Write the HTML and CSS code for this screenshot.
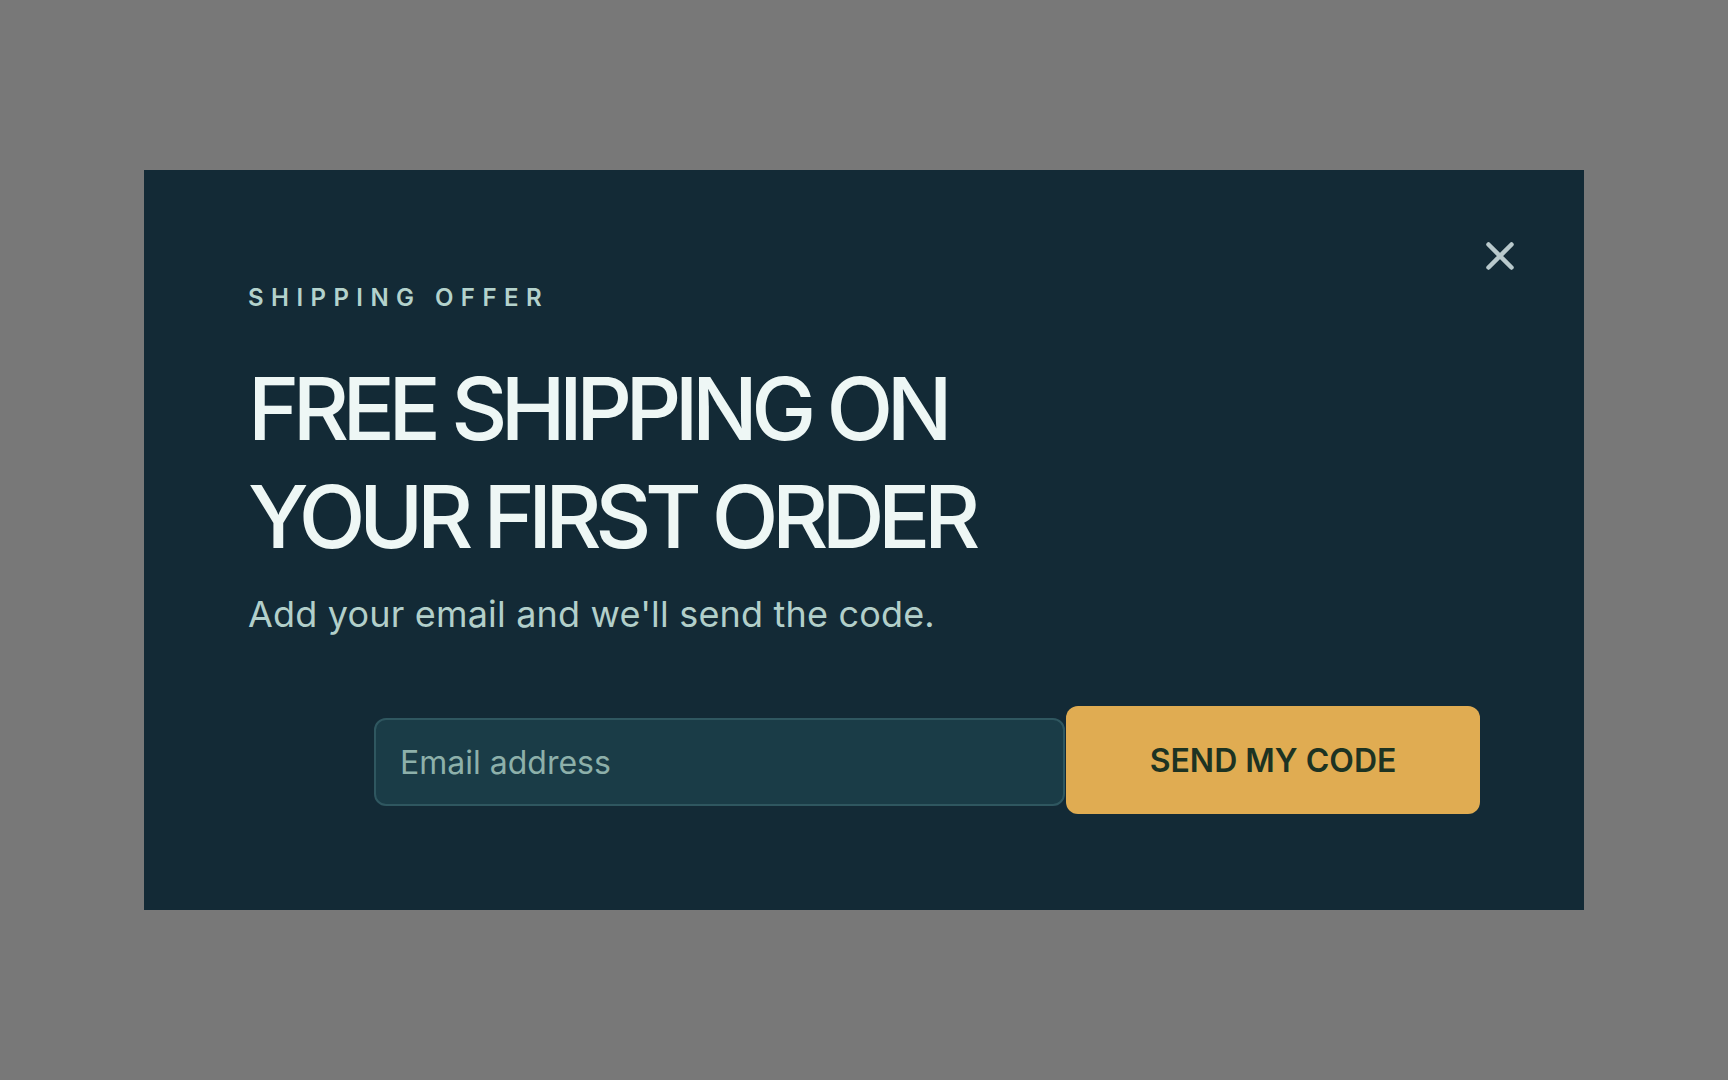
FILE: index.html
```html
<!DOCTYPE html>
<html lang="en">
<head>
    <meta charset="UTF-8">
    <meta name="viewport" content="width=device-width, initial-scale=1.0">
    <title>Free Shipping Offer</title>
    <link rel="stylesheet" href="styles.css">
</head>
<body>
    <div class="overlay">
        <div class="modal" role="dialog" aria-labelledby="offer-title">
            <button class="close-btn" type="button" aria-label="Close">
                <svg width="28" height="28" viewBox="0 0 28 28" fill="none">
                    <path d="M2.5 2.5L25.5 25.5M25.5 2.5L2.5 25.5" stroke="currentColor" stroke-width="4.5" stroke-linecap="round"/>
                </svg>
            </button>

            <div class="eyebrow">Shipping Offer</div>
            <h1 id="offer-title">Free shipping on<br>your first order</h1>
            <p class="subtitle">Add your email and we'll send the code.</p>

            <form class="signup-form" id="signup-form">
                <input type="email" class="email-input" placeholder="Email address">
                <button type="submit" class="submit-btn">Send my code</button>
            </form>
        </div>
    </div>
</body>
</html>
```

FILE: styles.css
```css
* {
    box-sizing: border-box;
}
body {
    margin: 0;
    background-color: #787878;
    font-family: Inter, "Noto Sans", sans-serif;
}
.overlay {
    height: 100vh;
    display: flex;
    align-items: center;
    justify-content: center;
}
.modal {
    position: relative;
    width: 1440px;
    height: 740px;
    padding: 113px 104px 0;
    background-color: #132a36;
    display: flex;
    flex-direction: column;
}
.close-btn {
    position: absolute;
    top: 62px;
    right: 60px;
    width: 48px;
    height: 48px;
    padding: 0;
    border: none;
    background: none;
    color: #b9c9cc;
    display: flex;
    align-items: center;
    justify-content: center;
    cursor: pointer;
}
.eyebrow {
    font-size: 24px;
    line-height: 29px;
    font-weight: 600;
    letter-spacing: 0.31em;
    text-transform: uppercase;
    color: #b3d2cc;
}
h1 {
    margin: 43px 0 0;
    font-size: 87px;
    line-height: 108px;
    font-weight: 500;
    letter-spacing: -0.075em;
    text-transform: uppercase;
    color: #eef7f5;
}
.subtitle {
    margin: 18px 0 0;
    font-size: 36px;
    line-height: 50px;
    letter-spacing: 0.005em;
    color: #b2cfca;
}
.signup-form {
    margin-top: 67px;
    display: flex;
    align-items: flex-start;
    justify-content: flex-end;
    gap: 1px;
}
.email-input {
    width: 691px;
    height: 88px;
    margin-top: 12px;
    padding: 0 24px;
    font-family: inherit;
    font-size: 32px;
    color: #eef7f5;
    background-color: #1a3c47;
    border: 2px solid #2f5760;
    border-radius: 12px;
    outline: none;
}
.email-input::placeholder {
    color: #8db0aa;
}
.submit-btn {
    width: 414px;
    height: 108px;
    font-family: inherit;
    font-size: 32px;
    font-weight: 600;
    text-transform: uppercase;
    color: #1d3322;
    background-color: #e0ac52;
    border: none;
    border-radius: 12px;
    cursor: pointer;
}
```
